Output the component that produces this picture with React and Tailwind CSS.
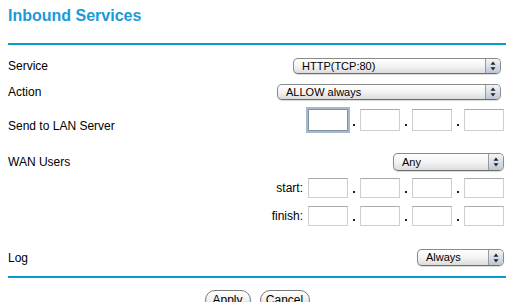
import React from 'react';

const font = { fontFamily: '"Liberation Sans", Arial, Helvetica, sans-serif' };

function Select({ value, width }) {
  return (
    <div
      className={`flex h-full items-stretch rounded-[5px] border border-[#8a8a8a] border-b-[#6e6e6e] bg-gradient-to-b from-white via-[#f4f4f4] to-[#dcdcdc] shadow-[0_1px_1px_rgba(0,0,0,0.15)] ${width}`}
    >
      <div className="flex flex-1 items-center pl-[8px] text-[11px] leading-none text-black">{value}</div>
      <div className="flex w-[15px] items-center justify-center rounded-r-[4px] border-l border-[#9a9a9a] bg-gradient-to-b from-[#f2f5f9] via-[#d7dfe9] to-[#bcc6d3]">
        <svg width="6" height="10" viewBox="0 0 6 10">
          <path d="M3 0.5 L5.5 3.8 L0.5 3.8 Z" fill="#222" />
          <path d="M3 9.5 L5.5 6.2 L0.5 6.2 Z" fill="#222" />
        </svg>
      </div>
    </div>
  );
}

function Box({ focused, h }) {
  if (focused) {
    return (
      <div className={`w-[40px] ${h} border border-[#7f8fa6] bg-white shadow-[0_0_0_2px_#a9b8cc]`} />
    );
  }
  return <div className={`w-[40px] ${h} border border-[#cfcfcf] border-t-[#a9a9a9] bg-white`} />;
}

function IpGroup({ h, focusFirst }) {
  const dot = (
    <div className="flex w-[12px] items-end justify-center">
      <div className="mb-[5px] h-[2px] w-[2px] bg-[#222]" />
    </div>
  );
  return (
    <div className="flex">
      <Box h={h} focused={focusFirst} />
      {dot}
      <Box h={h} />
      {dot}
      <Box h={h} />
      {dot}
      <Box h={h} />
    </div>
  );
}

export default function App() {
  return (
    <div className="h-[302px] w-[516px] overflow-hidden bg-white pl-2 pr-[10px] text-[12px] text-black" style={font}>
      <div className="pt-[7px] text-[16px] font-bold leading-[18px] text-[#1a9ad6]">Inbound Services</div>
      <div className="mt-[18px] h-[2px] bg-[#0a99cc]" />

      <div className="mt-[11px] flex h-[20px] items-center justify-between">
        <span className="leading-[14px]">Service</span>
        <div className="mr-[5px] h-[16px]">
          <Select value="HTTP(TCP:80)" width="w-[208px]" />
        </div>
      </div>

      <div className="mt-[6px] flex h-[20px] items-center justify-between">
        <span className="leading-[14px]">Action</span>
        <div className="mr-[5px] h-[16px]">
          <Select value="ALLOW always" width="w-[224px]" />
        </div>
      </div>

      <div className="mt-[4px] flex h-[28px] items-start justify-between">
        <span className="mt-[13px] leading-[14px]">Send to LAN Server</span>
        <div className="mr-[2px] mt-[3px]">
          <IpGroup h="h-[22px]" focusFirst />
        </div>
      </div>

      <div className="mt-[17px] flex h-[22px] items-center justify-between">
        <span className="leading-[14px]">WAN Users</span>
        <div className="mr-[2px] h-[18px]">
          <Select value="Any" width="w-[111px]" />
        </div>
      </div>

      <div className="mt-[5px] flex h-[20px] items-center justify-end gap-[5px] pr-[2px]">
        <span className="leading-[14px]">start:</span>
        <IpGroup h="h-[20px]" />
      </div>

      <div className="mt-[8px] flex h-[20px] items-center justify-end gap-[5px] pr-[2px]">
        <span className="leading-[14px]">finish:</span>
        <IpGroup h="h-[20px]" />
      </div>

      <div className="mt-[21px] flex h-[21px] items-center justify-between">
        <span className="leading-[14px]">Log</span>
        <div className="mr-[2px] h-[17px]">
          <Select value="Always" width="w-[87px]" />
        </div>
      </div>

      <div className="mt-[8px] h-[2px] bg-[#0a99cc]" />

      <div className="mt-[12px] flex justify-center gap-[9px]">
        <button className="h-[20px] w-[46px] rounded-full border border-[#7a7a7a] bg-gradient-to-b from-white via-[#f0f0f0] to-[#d4d4d4] text-[12px] leading-none shadow-[0_1px_1px_rgba(0,0,0,0.2)]">
          Apply
        </button>
        <button className="h-[20px] w-[50px] rounded-full border border-[#7a7a7a] bg-gradient-to-b from-white via-[#f0f0f0] to-[#d4d4d4] text-[12px] leading-none shadow-[0_1px_1px_rgba(0,0,0,0.2)]">
          Cancel
        </button>
      </div>
    </div>
  );
}
